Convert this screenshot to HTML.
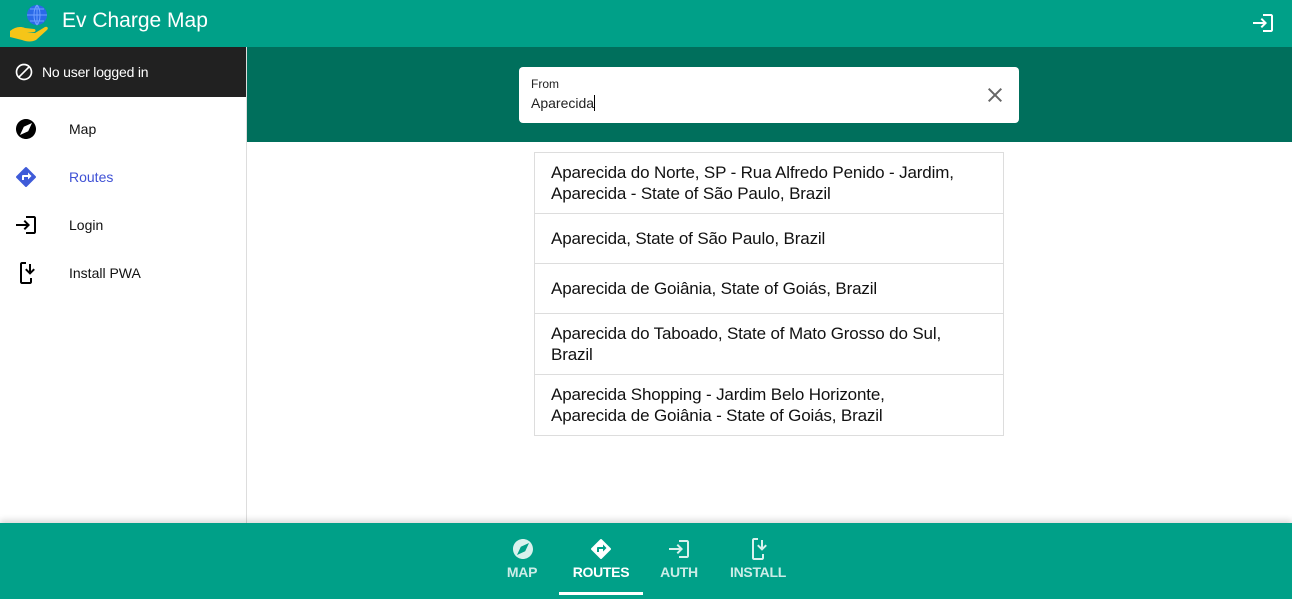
<!DOCTYPE html>
<html><head><meta charset="utf-8"><style>
*{box-sizing:border-box;margin:0;padding:0}
body{width:1292px;height:599px;overflow:hidden;font-family:"Liberation Sans",sans-serif;background:#fff;position:relative}
.top{position:absolute;left:0;top:0;width:1292px;height:47px;background:#00a088;color:#fff}
.top .t{position:absolute;left:62px;top:9px;font-size:21px}
.side{position:absolute;left:0;top:47px;width:247px;height:476px;border-right:1px solid #ddd;background:#fff}
.user{height:50px;background:#212121;color:#fff;font-size:14px;display:flex;align-items:center;padding-left:14px;letter-spacing:-0.2px}
.user svg{margin-right:8px}
.item{position:absolute;left:0;height:48px;width:246px;display:flex;align-items:center;font-size:14px;color:#111}
.item svg{position:absolute;left:14px}
.item span{position:absolute;left:69px}
.band{position:absolute;left:247px;top:47px;width:1045px;height:95px;background:#006f5c}
.inp{position:absolute;left:519px;top:67px;width:500px;height:56px;background:#fff;border-radius:4px}
.inp .l{position:absolute;left:12px;top:10px;font-size:12px;color:#222}
.inp .v{position:absolute;left:12px;top:28px;font-size:14px;color:#222}
.inp .v:after{content:"";display:inline-block;width:1px;height:16px;background:#000;vertical-align:-3px}
.list{position:absolute;left:534px;top:152px;width:470px}
.li{border:1px solid #ddd;margin-top:-1px;padding:0 16px;font-size:17px;line-height:21px;color:#111;display:flex;align-items:center;letter-spacing:-0.15px}
.bot{position:absolute;left:0;top:523px;width:1292px;height:76px;background:#00a088;box-shadow:0 -3px 6px rgba(0,0,0,.15)}
.tab{position:absolute;top:0;height:73px;color:rgba(255,255,255,.8);font-size:14px;text-align:center;font-weight:bold;letter-spacing:-0.3px}
.tab svg{position:absolute;top:14px}
.tab span{position:absolute;top:41px;left:0;right:0}
</style></head><body>
<div class="top">
<svg style="position:absolute;left:8px;top:3px" width="42" height="40" viewBox="0 0 42 40"><path d="M2 28c5-4 10-5 15-3l9 1c2 0 2 3 0 3h-7l8 1 10-6c2-1 4 1 2 3L28 37c-4 2-9 2-14 0l-12-3z" fill="#f5c518"/><circle cx="29" cy="12" r="10" fill="#2a6ae8"/><path d="M19 12h20M29 2v20M22 6h14M22 18h14M29 2c-4 4-4 16 0 20M29 2c4 4 4 16 0 20" stroke="#6fa0ff" stroke-width="1" fill="none"/></svg>
<div class="t">Ev Charge Map</div>
<svg style="position:absolute;left:1251px;top:11px" width="24" height="24" viewBox="0 0 24 24" fill="#fff"><path d="M11 7L9.6 8.4l2.6 2.6H2v2h10.2l-2.6 2.6L11 17l5-5-5-5zm9 12h-8v2h8c1.1 0 2-.9 2-2V5c0-1.1-.9-2-2-2h-8v2h8v14z"/></svg>
</div>
<div class="side">
<div class="user"><svg width="20" height="20" viewBox="0 0 24 24" fill="#fff"><path d="M12 2C6.48 2 2 6.48 2 12s4.48 10 10 10 10-4.48 10-10S17.520 2 12 2zM4 12c0-4.42 3.58-8 8-8 1.85 0 3.55.63 4.9 1.69L5.69 16.9C4.630 15.55 4 13.85 4 12zm8 8c-1.85 0-3.55-.63-4.9-1.69L18.31 7.1C19.37 8.45 20 10.15 20 12c0 4.42-3.58 8-8 8z"/></svg>No user logged in</div>
<div class="item" style="top:58px"><svg width="24" height="24" viewBox="0 0 24 24"><path fill="#000" d="M12 2C6.48 2 2 6.48 2 12s4.48 10 10 10 10-4.48 10-10S17.52 2 12 2zm2.19 12.19L6 18l3.81-8.19L18 6l-3.81 8.19z"/></svg><span>Map</span></div>
<div class="item" style="top:106px;color:#3f51d5"><svg width="24" height="24" viewBox="0 0 24 24"><path fill="#3f5bd8" d="M21.71 11.29l-9-9c-.39-.39-1.02-.39-1.41 0l-9 9c-.39.39-.39 1.02 0 1.41l9 9c.39.39 1.02.39 1.41 0l9-9c.39-.38.39-1.01 0-1.410zM14 14.5V12h-4v3H8v-4c0-.55.45-1 1-1h5V7.5l3.5 3.5-3.5 3.5z"/></svg><span>Routes</span></div>
<div class="item" style="top:154px"><svg width="24" height="24" viewBox="0 0 24 24"><path d="M11 7L9.6 8.4l2.6 2.6H2v2h10.2l-2.6 2.6L11 17l5-5-5-5zm9 12h-8v2h8c1.1 0 2-.9 2-2V5c0-1.1-.9-2-2-2h-8v2h8v14z"/></svg><span>Login</span></div>
<div class="item" style="top:202px"><svg width="24" height="24" viewBox="0 0 24 24"><path d="M6 3c0-1.1.9-2 2-2h4v2H8v18h8v-4h2v4c0 1.1-.9 2-2 2H8c-1.1 0-2-.9-2-2zM15 3h2v7l2.5-2.5 1.4 1.4L16 13.8l-4.9-4.9 1.4-1.4L15 10z"/></svg><span>Install PWA</span></div>
</div>
<div class="band"></div>
<div class="inp"><div class="l">From</div><div class="v">Aparecida</div>
<svg style="position:absolute;left:464px;top:16px" width="24" height="24" viewBox="0 0 24 24"><path fill="#666" d="M19 6.41L17.59 5 12 10.59 6.41 5 5 6.41 10.59 12 5 17.59 6.41 19 12 13.41 17.59 19 19 17.59 13.41 12z"/></svg></div>
<div class="list">
<div class="li" style="height:62px;margin-top:0">Aparecida do Norte, SP - Rua Alfredo Penido - Jardim,<br>Aparecida - State of São Paulo, Brazil</div>
<div class="li" style="height:51px">Aparecida, State of São Paulo, Brazil</div>
<div class="li" style="height:51px">Aparecida de Goiânia, State of Goiás, Brazil</div>
<div class="li" style="height:62px">Aparecida do Taboado, State of Mato Grosso do Sul,<br>Brazil</div>
<div class="li" style="height:62px">Aparecida Shopping - Jardim Belo Horizonte,<br>Aparecida de Goiânia - State of Goiás, Brazil</div>
</div>
<div class="bot">
<div class="tab" style="left:492px;width:60px"><svg style="left:19px" width="24" height="24" viewBox="0 0 24 24"><path fill="rgba(255,255,255,.85)" d="M12 2C6.48 2 2 6.48 2 12s4.48 10 10 10 10-4.48 10-10S17.52 2 12 2zm2.19 12.19L6 18l3.81-8.19L18 6l-3.81 8.19z"/></svg><span>MAP</span></div>
<div class="tab" style="left:559px;width:84px;color:#fff;border-bottom:3px solid #fff;height:72px"><svg style="left:30px" width="24" height="24" viewBox="0 0 24 24"><path fill="#fff" d="M21.71 11.29l-9-9c-.39-.39-1.02-.39-1.41 0l-9 9c-.39.39-.39 1.02 0 1.41l9 9c.39.39 1.02.39 1.41 0l9-9c.39-.38.39-1.01 0-1.41zM14 14.5V12h-4v3H8v-4c0-.55.45-1 1-1h5V7.5l3.5 3.5-3.5 3.5z"/></svg><span>ROUTES</span></div>
<div class="tab" style="left:649px;width:60px"><svg style="left:18px" width="24" height="24" viewBox="0 0 24 24"><path fill="rgba(255,255,255,.85)" d="M11 7L9.6 8.4l2.6 2.6H2v2h10.2l-2.6 2.6L11 17l5-5-5-5zm9 12h-8v2h8c1.1 0 2-.9 2-2V5c0-1.1-.9-2-2-2h-8v2h8v14z"/></svg><span>AUTH</span></div>
<div class="tab" style="left:722px;width:72px"><svg style="left:24px" width="24" height="24" viewBox="0 0 24 24"><path fill="rgba(255,255,255,.85)" d="M6 3c0-1.1.9-2 2-2h4v2H8v18h8v-4h2v4c0 1.1-.9 2-2 2H8c-1.1 0-2-.9-2-2zM15 3h2v7l2.5-2.5 1.4 1.4L16 13.8l-4.9-4.9 1.4-1.4L15 10z"/></svg><span>INSTALL</span></div>
</div>
</body></html>
